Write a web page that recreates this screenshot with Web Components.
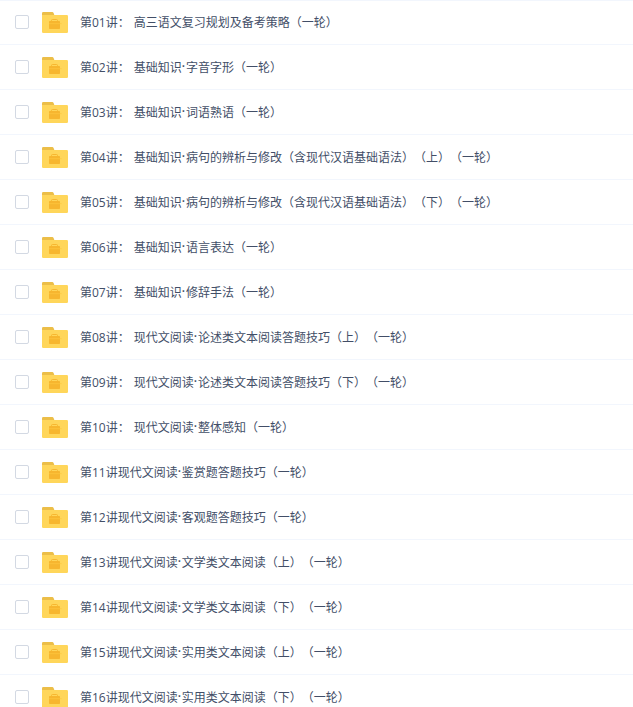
<!DOCTYPE html>
<html lang="zh-CN">
<head>
<meta charset="utf-8">
<title>文件列表</title>
<style>
  body {
    margin: 0;
    background: #fff;
    overflow: hidden;
  }
</style>
</head>
<body>
<file-list>
  <file-row name="第01讲： 高三语文复习规划及备考策略（一轮）"></file-row>
  <file-row name="第02讲： 基础知识·字音字形（一轮）"></file-row>
  <file-row name="第03讲： 基础知识·词语熟语（一轮）"></file-row>
  <file-row name="第04讲： 基础知识·病句的辨析与修改（含现代汉语基础语法）（上）（一轮）"></file-row>
  <file-row name="第05讲： 基础知识·病句的辨析与修改（含现代汉语基础语法）（下）（一轮）"></file-row>
  <file-row name="第06讲： 基础知识·语言表达（一轮）"></file-row>
  <file-row name="第07讲： 基础知识·修辞手法（一轮）"></file-row>
  <file-row name="第08讲： 现代文阅读·论述类文本阅读答题技巧（上）（一轮）"></file-row>
  <file-row name="第09讲： 现代文阅读·论述类文本阅读答题技巧（下）（一轮）"></file-row>
  <file-row name="第10讲： 现代文阅读·整体感知（一轮）"></file-row>
  <file-row name="第11讲现代文阅读·鉴赏题答题技巧（一轮）"></file-row>
  <file-row name="第12讲现代文阅读·客观题答题技巧（一轮）"></file-row>
  <file-row name="第13讲现代文阅读·文学类文本阅读（上）（一轮）"></file-row>
  <file-row name="第14讲现代文阅读·文学类文本阅读（下）（一轮）"></file-row>
  <file-row name="第15讲现代文阅读·实用类文本阅读（上）（一轮）"></file-row>
  <file-row name="第16讲现代文阅读·实用类文本阅读（下）（一轮）"></file-row>
</file-list>

<script>
class FileList extends HTMLElement {
  constructor() {
    super();
    this.attachShadow({ mode: "open" });
    this.shadowRoot.innerHTML = `
      <style>
        :host {
          display: block;
          height: 707px;
          overflow: hidden;
          color: #424e67;
          font: 12px/18px "Open Sans", "Noto Sans CJK SC", sans-serif;
          --line: #f2f6fd;
          box-shadow: inset 0 1px var(--line);
        }
      </style>
      <slot></slot>
    `;
  }
}

customElements.define("file-list", FileList);


class CheckBox extends HTMLElement {
  constructor() {
    super();
    this.attachShadow({ mode: "open" });
    this.shadowRoot.innerHTML = `
      <style>
        :host {
          display: block;
          box-sizing: border-box;
          flex: none;
          width: 14px;
          height: 14px;
          border: 1px solid #d3d9e3;
          border-radius: 2px;
        }
      </style>
    `;
  }
}

customElements.define("check-box", CheckBox);


class FolderIcon extends HTMLElement {
  constructor() {
    super();
    this.attachShadow({ mode: "open" });
    this.shadowRoot.innerHTML = `
      <style>
        :host {
          display: block;
          flex: none;
          width: 26px;
          height: 21px;
        }
        svg {
          display: block;
        }
      </style>
      <svg width="26" height="21" viewBox="0 0 26 21">
        <path fill="#ecbe48" d="M0 5V1.2Q0 0 1.2 0H10.3Q11.2 0 11.6 1L12.3 3V5z"/>
        <path fill="#ffd65a" d="M0 3H24.8Q26 3 26 4.2V19.8Q26 21 24.8 21H1.2Q0 21 0 19.8z"/>
        <path fill="none" stroke="#f7b62f" d="M9.5 9.5V8.5Q9.5 7.5 10.5 7.5H14.5Q15.5 7.5 15.5 8.5V9.5"/>
        <rect fill="#f7b62f" x="7" y="9" width="11" height="8" rx="0.8"/>
        <path fill="#fdc63e" d="M7 11.4H19.6V12.1H7z"/>
      </svg>
    `;
  }
}

customElements.define("folder-icon", FolderIcon);


class FileRow extends HTMLElement {
  constructor() {
    super();
    this.attachShadow({ mode: "open" });
    this.shadowRoot.innerHTML = `
      <style>
        :host {
          display: flex;
          align-items: center;
          box-sizing: border-box;
          height: 45px;
          padding-left: 15px;
          border-bottom: 1px solid var(--line);
        }
        folder-icon {
          margin: 1px 12px 0 13px;
        }
        .name {
          padding-top: 2px;
          white-space: nowrap;
          word-spacing: 1px;
          text-spacing-trim: space-all;
        }
        /* the middle dot takes a third of an em */
        .dot {
          letter-spacing: 0.8px;
          line-height: 1;
          vertical-align: 1px;
          font-weight: 600;
        }
      </style>
      <check-box></check-box>
      <folder-icon></folder-icon>
      <span class="name"></span>
    `;
  }

  connectedCallback() {
    const name = this.getAttribute("name");
    this.shadowRoot.querySelector(".name").innerHTML = name.replace("·", '<span class="dot">·</span>');
  }
}

customElements.define("file-row", FileRow);
</script>
</body>
</html>
